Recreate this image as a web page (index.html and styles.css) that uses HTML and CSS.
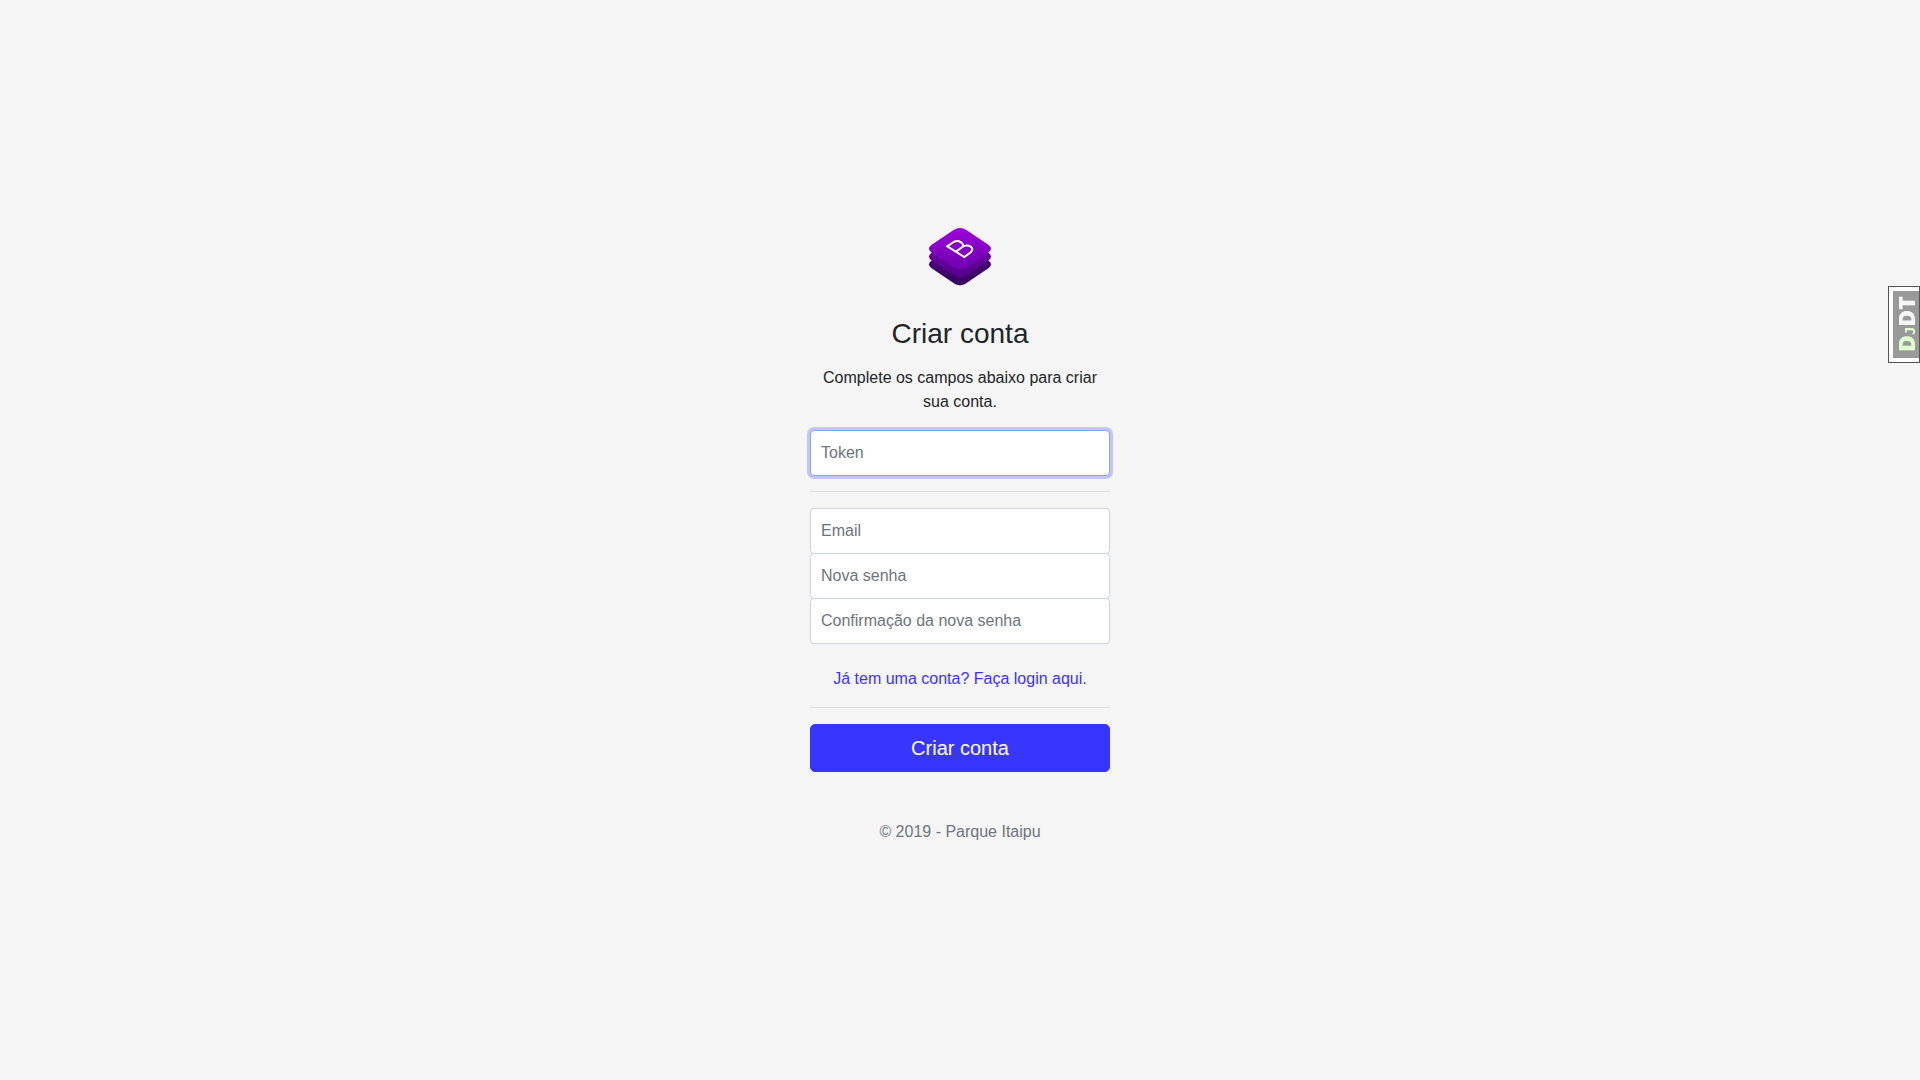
FILE: index.html
```html
<!DOCTYPE html>
<html lang="pt-BR">
<head>
<meta charset="utf-8">
<meta name="viewport" content="width=device-width, initial-scale=1">
<title>Criar conta</title>
<link rel="stylesheet" href="styles.css">
</head>
<body>
<main class="signup">
  <form class="form">
    <svg class="logo" viewBox="42 12 216 216" aria-hidden="true">
      <defs>
        <linearGradient id="top" x1="0" y1="0" x2="0" y2="1"><stop offset="0" stop-color="#9b00dc"/><stop offset="1" stop-color="#6f00ad"/></linearGradient>
        <linearGradient id="mid" x1="0" y1="0" x2="0" y2="1"><stop offset="0" stop-color="#7800b4"/><stop offset="1" stop-color="#520088"/></linearGradient>
        <linearGradient id="low" x1="0" y1="0" x2="0" y2="1"><stop offset="0" stop-color="#56008c"/><stop offset="1" stop-color="#36005c"/></linearGradient>
        <path id="tile" d="M132 41Q150 31 168 41L236 87Q250 98 236 109L168 155Q150 167 132 155L64 109Q50 98 64 87Z"/>
      </defs>
      <use href="#tile" y="49" fill="#00000018"/>
      <use href="#tile" y="47" fill="url(#low)"/>
      <use href="#tile" y="24" fill="url(#mid)"/>
      <use href="#tile" fill="url(#top)"/>
      <path d="M112 91L163 123L182 109Q192 99 182 92Q170 85 157 93Q163 86 153 79Q142 72 131 78ZM138 107L157 93" fill="none" stroke="#fff" stroke-width="6"/>
    </svg>
    <h1 class="title">Criar conta</h1>
    <p class="intro">Complete os campos abaixo para criar sua conta.</p>
    <input class="field" type="text" placeholder="Token" aria-label="Token" autofocus>
    <hr class="rule">
    <input class="field" type="email" placeholder="Email" aria-label="Email">
    <input class="field" type="password" placeholder="Nova senha" aria-label="Nova senha">
    <input class="field" type="password" placeholder="Confirmação da nova senha" aria-label="Confirmação da nova senha">
    <p class="login"><a class="link" href="#">Já tem uma conta? Faça login aqui.</a></p>
    <hr class="rule">
    <button class="submit" type="submit">Criar conta</button>
    <p class="copyright">© 2019 - Parque Itaipu</p>
  </form>
</main>
<aside class="debug"><a class="debug-link" href="#" title="Debug toolbar"><span class="debug-dj">D<small class="debug-j">J</small></span>DT</a></aside>
</body>
</html>
```
FILE: styles.css
```css
* { box-sizing: border-box; }
body {
  margin: 0;
  background: #f5f5f5;
  color: #212529;
  font: 16px/24px "Liberation Sans", Arial, sans-serif;
}
.signup {
  display: flex;
  align-items: center;
  justify-content: center;
  min-height: 100vh;
}
.form {
  display: flex;
  flex-direction: column;
  width: 100%;
  max-width: 330px;
  padding: 0 15px;
  text-align: center;
}
.logo {
  align-self: center;
  width: 72px;
  height: 72px;
  margin-bottom: 24px;
}
.title {
  margin: 0 0 14px;
  font-size: 28px;
  font-weight: 400;
  line-height: 36px;
}
.intro { margin: 0 0 16px; }
.field {
  position: relative;
  width: 100%;
  height: 46px;
  margin: 0 0 -1px;
  padding: 10px;
  border: 1px solid #ced4da;
  border-radius: 4px;
  background: #fff;
  color: #495057;
  font: inherit;
}
.field::placeholder { color: #6c757d; opacity: 1; }
.field[autofocus], .field:focus {
  z-index: 2;
  border-color: #80a5ff;
  outline: 0;
  box-shadow: 0 0 0 3px #3633ff40;
  caret-color: transparent;
}
.rule {
  width: 100%;
  margin: 16px 0;
  border: 0;
  border-top: 1px solid #dcdcdc;
}
.login { margin: 24px 0 0; }
.link { color: #3a33ff; text-decoration: none; }
.submit {
  height: 48px;
  padding: 8px 16px;
  border: 1px solid #3835ff;
  border-radius: 5px;
  background: #3835ff;
  color: #fff;
  font: 20px/30px "Liberation Sans", Arial, sans-serif;
}
.copyright { margin: 48px 0 16px; color: #6c757d; }
.debug {
  position: fixed;
  top: 286px;
  right: 0;
  padding: 4px 0 4px 4px;
  border: 1px solid #555;
  background: #fff;
}
.debug-link {
  display: block;
  width: 26px;
  height: 67px;
  padding-right: 1px;
  background: #999;
  color: #f5f5f5;
  font: 800 23px/24px "Open Sans", sans-serif;
  text-align: center;
  text-decoration: none;
  writing-mode: vertical-rl;
  text-orientation: sideways;
  transform: rotate(180deg);
}
.debug-dj { color: #dfffcf; }
.debug-j { font: 700 14px/14px "DejaVu Sans Mono", monospace; }
```
